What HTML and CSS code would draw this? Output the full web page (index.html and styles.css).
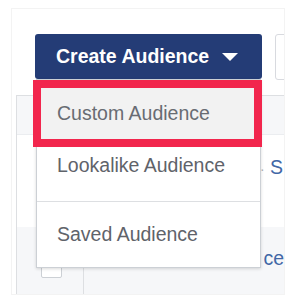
FILE: index.html
```html
<!DOCTYPE html>
<html lang="en">
<head>
  <meta charset="UTF-8" />
  <title>Create Audience</title>
  <link rel="stylesheet" href="styles.css">
</head>
<body>

  <div class="panel">
    <div class="toolbar">
      <button class="btn-create">Create Audience <span class="caret"></span></button>
      <button class="btn-other"></button>
    </div>

    <!-- table behind the menu -->
    <div class="table">
      <div class="row head"></div>
      <div class="row">
        <div class="cell-check"></div>
        <div class="cell-name"><span class="dot">·</span> S</div>
      </div>
      <div class="row alt">
        <div class="cell-check"><span class="checkbox"></span></div>
        <div class="cell-name name-2">ce</div>
      </div>
    </div>

    <!-- dropdown -->
    <div class="menu">
      <div class="menu-item active">Custom Audience</div>
      <div class="menu-item look">Lookalike Audience</div>
      <div class="menu-item saved">Saved Audience</div>
    </div>
  </div>

</body>
</html>
```

FILE: styles.css
```css
body {
  margin: 0;
  background-color: #fff;
  font-family: "Liberation Sans", Arial, sans-serif;
}
.panel {
  position: relative;
  margin: 8px 0 0 11px;
  width: 272px;
  height: 285px;
  border: 1px solid #f3f3f3;
  overflow: hidden;
}
.toolbar {
  display: flex;
  gap: 13px;
  padding: 25px 0 0 23px;
}
.btn-create {
  flex: none;
  display: flex;
  align-items: center;
  width: 227px;
  height: 45px;
  padding: 0 0 0 21px;
  background-color: #243c76;
  color: #fff;
  border: none;
  border-radius: 3px;
  font-family: inherit;
  font-size: 19.5px;
  font-weight: bold;
  white-space: nowrap;
}
.caret {
  display: inline-block;
  margin-left: 13px;
  width: 0;
  height: 0;
  border-left: 8px solid transparent;
  border-right: 8px solid transparent;
  border-top: 8px solid #fff;
}
.btn-other {
  flex: none;
  width: 40px;
  height: 46px;
  background-color: #fff;
  border: 1px solid #d8dadf;
  border-radius: 3px;
}
.table {
  margin: 15px 0 0 4px;
  border-left: 1px solid #dddfe2;
}
.row {
  display: flex;
  height: 92px;
}
.row.head {
  height: 38px;
  background-color: #f6f7f9;
  border-top: 1px solid #dddfe2;
  border-bottom: 1px solid #ebedf0;
}
.row.alt {
  height: 70px;
  background-color: #f6f7f9;
}
.cell-check {
  width: 67px;
  border-right: 1px solid #dddfe2;
}
.row.head .cell-check, .row:nth-child(2) .cell-check {
  border-right: none;
}
.checkbox {
  display: block;
  margin: 30px 0 0 24px;
  width: 19px;
  height: 19px;
  background-color: #fff;
  border: 1px solid #ccd0d5;
  border-radius: 2px;
}
.cell-name {
  padding: 21px 0 0 176px;
  font-size: 19.5px;
  color: #4267a6;
  white-space: nowrap;
}
.dot {
  color: #b0b3b8;
  font-size: 14px;
}
.name-2 {
  padding: 20px 0 0 179px;
}
.menu {
  position: absolute;
  left: 24px;
  top: 70px;
  width: 223px;
  background-color: #fff;
  border: 1px solid #ccd0d5;
  box-shadow: 0 1px 3px rgba(0, 0, 0, 0.15);
}
.menu-item {
  font-size: 19.5px;
  line-height: 22px;
  color: #5f636a;
  padding-left: 20px;
  white-space: nowrap;
}
.menu-item.active {
  margin: 8px 6px 0 4px;
  height: 51px;
  line-height: 51px;
  padding-left: 16px;
  background-color: #f2f2f2;
  color: #686c73;
  outline: 8px solid #f2264d;
}
.menu-item.look {
  padding-top: 15px;
  height: 47px;
  border-bottom: 1px solid #dddfe2;
}
.menu-item.saved {
  padding-top: 21px;
  height: 44px;
}
```
